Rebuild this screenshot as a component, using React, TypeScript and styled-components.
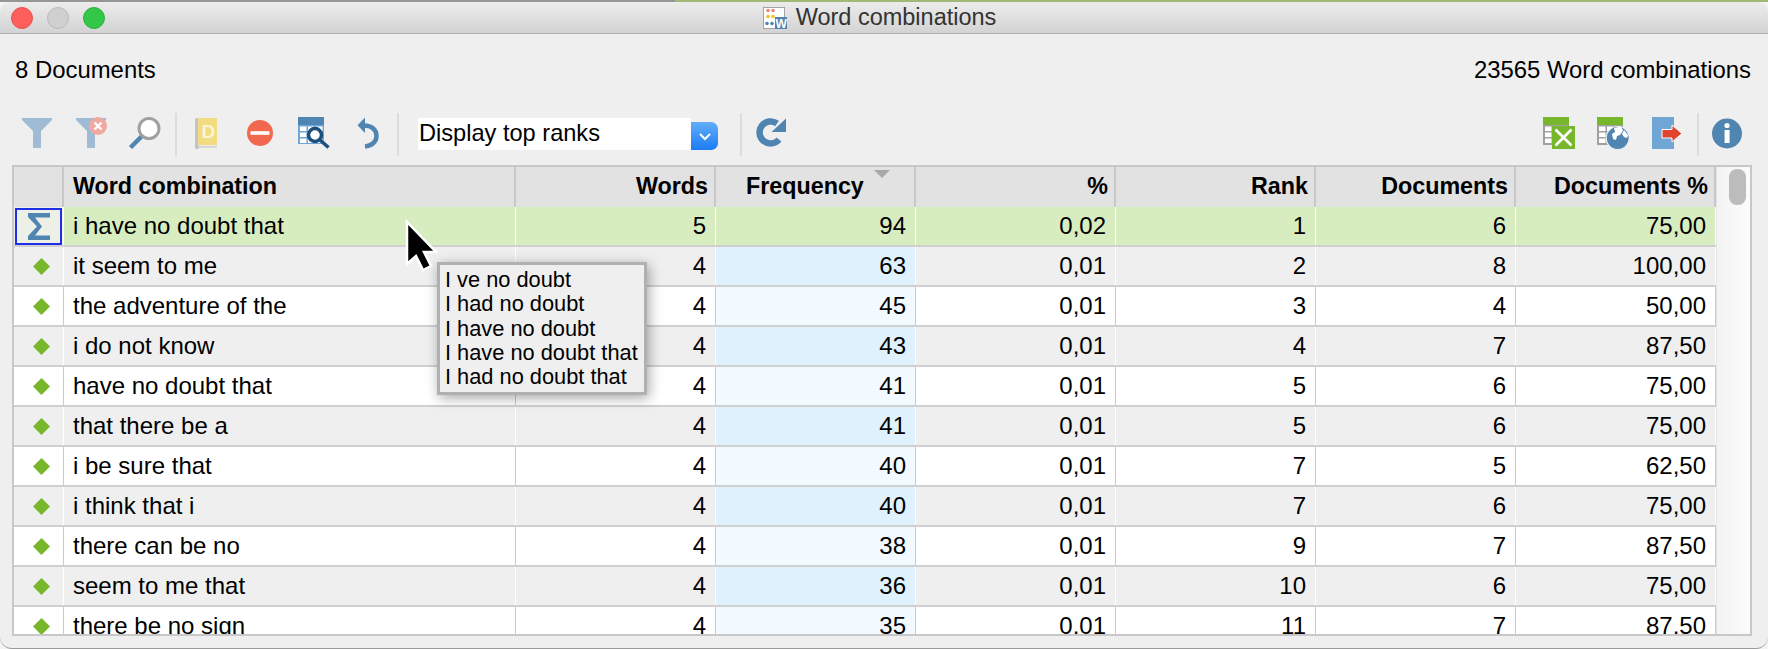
import styled, { createGlobalStyle } from "styled-components";

const GlobalStyle = createGlobalStyle`
  html, body { margin: 0; padding: 0; background: #f4f4f4; }
  body { font-family: "Liberation Sans", Arial, sans-serif; color: #000; }
`;

type Combination = {
  text: string;
  words: number;
  frequency: number;
  percent: string;
  rank: number;
  documents: number;
  documentsPercent: string;
};

const combinations: Combination[] = [
  { text: "i have no doubt that", words: 5, frequency: 94, percent: "0,02", rank: 1, documents: 6, documentsPercent: "75,00" },
  { text: "it seem to me", words: 4, frequency: 63, percent: "0,01", rank: 2, documents: 8, documentsPercent: "100,00" },
  { text: "the adventure of the", words: 4, frequency: 45, percent: "0,01", rank: 3, documents: 4, documentsPercent: "50,00" },
  { text: "i do not know", words: 4, frequency: 43, percent: "0,01", rank: 4, documents: 7, documentsPercent: "87,50" },
  { text: "have no doubt that", words: 4, frequency: 41, percent: "0,01", rank: 5, documents: 6, documentsPercent: "75,00" },
  { text: "that there be a", words: 4, frequency: 41, percent: "0,01", rank: 5, documents: 6, documentsPercent: "75,00" },
  { text: "i be sure that", words: 4, frequency: 40, percent: "0,01", rank: 7, documents: 5, documentsPercent: "62,50" },
  { text: "i think that i", words: 4, frequency: 40, percent: "0,01", rank: 7, documents: 6, documentsPercent: "75,00" },
  { text: "there can be no", words: 4, frequency: 38, percent: "0,01", rank: 9, documents: 7, documentsPercent: "87,50" },
  { text: "seem to me that", words: 4, frequency: 36, percent: "0,01", rank: 10, documents: 6, documentsPercent: "75,00" },
  { text: "there be no sign", words: 4, frequency: 35, percent: "0,01", rank: 11, documents: 7, documentsPercent: "87,50" },
];

const tooltipLines = ["I ve no doubt", "I had no doubt", "I have no doubt", "I have no doubt that", "I had no doubt that"];

const STEEL = "#5085b2";
const LIGHT_STEEL = "#6fa6d6";
const GREEN = "#78b62c";

const Page = styled.div`
  width: 1768px;
  height: 649px;
  overflow: hidden;
  position: relative;
`;

const TopStrip = styled.div`
  height: 2px;
  background: linear-gradient(to right, #969696 675px, #a3b878 675px);
`;

const Window = styled.div`
  height: 646px;
  background: #efefef;
  border-radius: 10px 10px 12px 12px;
  border-bottom: 1px solid #9a9a9a;
  overflow: hidden;
  display: flex;
  flex-direction: column;
`;

const TitleBar = styled.div`
  height: 31px;
  flex: none;
  display: grid;
  grid-template-columns: 1fr auto 1fr;
  align-items: center;
  background: linear-gradient(#ececec, #d3d3d3);
  border-bottom: 1px solid #b0b0b0;
  padding: 0 8px 0 11px;
`;

const Lights = styled.div`
  display: flex;
  gap: 14px;
`;

const Light = styled.span<{ $fill: string; $edge: string }>`
  width: 22px;
  height: 22px;
  border-radius: 50%;
  box-sizing: border-box;
  background: ${({ $fill }) => $fill};
  border: 1px solid ${({ $edge }) => $edge};
`;

const WindowTitle = styled.div`
  display: flex;
  align-items: center;
  gap: 9px;
  font-size: 23.5px;
  color: #333;
  margin-left: -12px;
`;

const InfoRow = styled.div`
  height: 78px;
  flex: none;
  display: flex;
  justify-content: space-between;
  align-items: center;
  padding: 0 17px 6px 15px;
  font-size: 23.9px;
  box-sizing: border-box;
`;

const Toolbar = styled.div`
  height: 44px;
  flex: none;
  display: flex;
  align-items: center;
  padding: 0 14px 0 10px;
`;

const ToolButton = styled.div`
  width: 54px;
  height: 40px;
  flex: none;
  display: flex;
  justify-content: center;
`;

const Divider = styled.div<{ $left?: number; $right?: number }>`
  width: 2px;
  height: 43px;
  flex: none;
  background: #dcdcdc;
  margin: 0 ${({ $right }) => $right ?? 3}px 0 ${({ $left }) => $left ?? 3}px;
`;

const Spacer = styled.div`
  flex: 1;
`;

const SelectBox = styled.div`
  display: flex;
  align-items: flex-end;
  margin-left: 16px;
  width: 300px;
  height: 32px;
  flex: none;
`;

const SelectLabel = styled.div`
  flex: 1;
  height: 32px;
  line-height: 31px;
  background: #fff;
  padding-left: 1px;
  font-size: 23.6px;
`;

const SelectArrow = styled.div`
  width: 27px;
  height: 28px;
  display: flex;
  align-items: center;
  justify-content: center;
  border-radius: 0 7px 7px 0;
  background: linear-gradient(#62adf8, #1b7cf4);
`;

const Table = styled.div`
  margin: 9px 16px 0 12px;
  height: 467px;
  flex: none;
  border: 2px solid #c8c8c8;
  display: flex;
  overflow: hidden;
  background: #fff;
`;

const Sheet = styled.div`
  width: 1702px;
  flex: none;
  overflow: hidden;
`;

const columns = "50px 452px repeat(6, 200px)";

const HeaderRow = styled.div`
  display: grid;
  grid-template-columns: ${columns};
  height: 40px;
  background: #e2e2e2;
`;

const HeaderCell = styled.div<{ $align?: string; $pad?: number }>`
  position: relative;
  display: flex;
  align-items: center;
  justify-content: ${({ $align }) => $align ?? "flex-end"};
  box-sizing: border-box;
  padding: 0 ${({ $pad }) => $pad ?? 6}px 2px 9px;
  border-right: 2px solid #c8c8c8;
  font-size: 23.3px;
  font-weight: 700;
`;

const FrequencyLabel = styled.span`
  margin-left: 21px;
`;

const SortMark = styled.span`
  position: absolute;
  right: 24px;
  top: 3px;
  width: 0;
  height: 0;
  border-left: 8px solid transparent;
  border-right: 8px solid transparent;
  border-top: 8px solid #a8a8a8;
`;

const RowWrap = styled.div<{ $bg: string }>`
  display: grid;
  grid-template-columns: ${columns};
  height: 40px;
  box-sizing: border-box;
  border-bottom: 2px solid #d0d0d0;
  background: ${({ $bg }) => $bg};
`;

const Cell = styled.div<{ $line: string; $bg?: string; $left?: boolean }>`
  display: flex;
  align-items: center;
  justify-content: ${({ $left }) => ($left ? "flex-start" : "flex-end")};
  box-sizing: border-box;
  padding: 0 9px 0 9px;
  border-right: 1px solid ${({ $line }) => $line};
  background: ${({ $bg }) => $bg ?? "transparent"};
  font-size: 24px;
  white-space: nowrap;
`;

const MarkerCell = styled.div<{ $line: string; $bg?: string; $shift: number }>`
  display: flex;
  align-items: center;
  justify-content: center;
  padding-left: ${({ $shift }) => $shift}px;
  border-right: 1px solid ${({ $line }) => $line};
  background: ${({ $bg }) => $bg ?? "transparent"};
`;

const TotalBox = styled.div`
  width: 47px;
  height: 37px;
  box-sizing: border-box;
  border: 2px solid #1f2fe6;
  background: #ecf0e6;
  display: flex;
  align-items: center;
  justify-content: center;
`;

const ScrollTrack = styled.div`
  flex: 1;
  background: linear-gradient(to right, #f3f3f3, #fbfbfb);
  border-left: 1px solid #e4e4e4;
  padding: 2px 4px 0 12px;
`;

const ScrollThumb = styled.div`
  height: 36px;
  border-radius: 8px;
  background: #bcbcbc;
`;

const Tooltip = styled.div`
  position: absolute;
  left: 437px;
  top: 262px;
  width: 210px;
  height: 133px;
  box-sizing: border-box;
  padding: 3px 5px;
  background: #efefef;
  border: 3px solid #b0b0b0;
  box-shadow: 2px 3px 12px rgba(0, 0, 0, 0.35);
  font-size: 21.8px;
  line-height: 24.3px;
  white-space: nowrap;
`;

const Pointer = styled.svg`
  position: absolute;
  left: 404px;
  top: 219px;
`;

const FunnelShape = () => <polygon points="5,4 35,4 35,6 24,17 24,34 16,34 16,17 5,6" fill="#9fbcd4" />;

const Icon = ({ children }: { children: React.ReactNode }) => (
  <svg width="40" height="40" viewBox="0 0 40 40">
    {children}
  </svg>
);

const TableCells = () => (
  <>
    {[0, 1, 2].map((r) =>
      [0, 1, 2].map((c) => <rect key={`${r}-${c}`} x={6 + c * 8} y={12.5 + r * 6} width="6.5" height="4.5" fill="#fff" />),
    )}
  </>
);

const FilterIcon = () => (
  <Icon>
    <FunnelShape />
  </Icon>
);

const ClearFilterIcon = () => (
  <Icon>
    <FunnelShape />
    <circle cx="27" cy="12" r="9" fill="#f0a9a0" />
    <path d="M23.5 8.5l7 7M30.5 8.5l-7 7" stroke="#fff" strokeWidth="2.4" />
  </Icon>
);

const SearchIcon = () => (
  <Icon>
    <path d="M5.5 33.5L17 22" stroke={STEEL} strokeWidth="4.5" />
    <circle cx="24" cy="14.5" r="10" fill="#fff" stroke="#a0a0a0" strokeWidth="3" />
  </Icon>
);

const BookIcon = () => (
  <Icon>
    <rect x="9" y="4" width="4" height="31" rx="1.5" fill="#c4c4c4" />
    <rect x="12" y="4" width="19" height="27" fill="#f2dc82" />
    <rect x="12" y="32" width="19" height="1.5" fill="#cfcfcf" />
    <text x="15.5" y="24" fontFamily="Liberation Sans, sans-serif" fontSize="19" fontWeight="700" fill="#fbf5d6">
      D
    </text>
  </Icon>
);

const RemoveIcon = () => (
  <Icon>
    <circle cx="20" cy="19" r="13" fill="#f1684f" />
    <rect x="10.5" y="17.2" width="19" height="3.6" fill="#fff" />
  </Icon>
);

const TableSearchIcon = () => (
  <Icon>
    <rect x="4" y="3" width="26" height="27" fill={LIGHT_STEEL} />
    <rect x="4" y="3" width="26" height="8" fill={STEEL} />
    <TableCells />
    <circle cx="21" cy="21" r="6.5" fill="#fff" stroke="#1d4f7d" strokeWidth="3.5" />
    <path d="M26 26l8.5 7.5" stroke="#1d4f7d" strokeWidth="3.5" />
  </Icon>
);

const UndoIcon = () => (
  <Icon>
    <polygon points="9.5,11.3 17,3.5 17,19" fill={STEEL} />
    <path d="M16 11.5C24 11.5 28.5 16 28.5 22C28.5 28 23.5 32 17 32.5" fill="none" stroke={STEEL} strokeWidth="4.5" />
  </Icon>
);

const ReloadIcon = () => (
  <Icon>
    <path d="M26 9.5A11 11 0 1 0 28 25.5" fill="none" stroke={STEEL} strokeWidth="6.5" />
    <polygon points="35,4.5 35,18 20.5,18" fill={STEEL} />
  </Icon>
);

const ExcelIcon = () => (
  <Icon>
    <rect x="4" y="3" width="26" height="28" fill="#a0a0a0" />
    <rect x="4" y="3" width="26" height="8" fill={GREEN} />
    <TableCells />
    <rect x="13" y="12" width="23" height="23" fill={GREEN} />
    <path d="M16.5 15.5l16 16M32.5 15.5l-16 16" stroke="#fff" strokeWidth="2.6" />
  </Icon>
);

const WebTableIcon = () => (
  <Icon>
    <rect x="4" y="3" width="26" height="28" fill="#a0a0a0" />
    <rect x="4" y="3" width="26" height="8" fill={GREEN} />
    <TableCells />
    <circle cx="24.7" cy="24" r="11.5" fill={STEEL} stroke="#eaf1f7" strokeWidth="1.2" />
    <path d="M21 14l7-1.5 2 4-3 4.5-3 1 -1 4-3-1-1-5 3-2z" fill="#fff" />
    <path d="M31 16l4 5-1 3-3-1-2-3z" fill="#fff" />
  </Icon>
);

const ExportIcon = () => (
  <Icon>
    <rect x="5" y="3" width="22" height="32" fill={LIGHT_STEEL} />
    <polygon points="15,15.5 25,15.5 25,11 35,19.5 25,28 25,24 15,24" fill="#e2452f" stroke="#fff" strokeWidth="1" />
  </Icon>
);

const InfoIcon = () => (
  <Icon>
    <circle cx="20" cy="19.5" r="15" fill={STEEL} />
    <circle cx="20" cy="11.5" r="2.6" fill="#fff" />
    <rect x="17.6" y="16" width="5" height="13" fill="#fff" />
  </Icon>
);

const DocIcon = () => (
  <svg width="24" height="22" viewBox="0 0 24 22">
    <rect x="0.5" y="0.5" width="21" height="21" fill="#fff" stroke="#a3a3a3" />
    <circle cx="5" cy="3.5" r="1.8" fill="#f0857a" />
    <circle cx="10" cy="3.5" r="1.8" fill="#f0857a" />
    <circle cx="5" cy="9.5" r="1.8" fill="#f2c521" />
    <circle cx="10" cy="9.5" r="1.8" fill="#f2c521" />
    <circle cx="4" cy="16.5" r="1.8" fill={STEEL} />
    <circle cx="9" cy="16.5" r="1.8" fill={STEEL} />
    <rect x="12" y="10" width="12" height="12" fill={STEEL} />
    <text x="12.6" y="20.5" fontFamily="Liberation Sans, sans-serif" fontSize="12" fontWeight="700" fill="#fff">
      W
    </text>
  </svg>
);

const Diamond = () => (
  <svg width="17" height="17" viewBox="0 0 16 16">
    <polygon points="8,0 16,8 8,16 0,8" fill={GREEN} />
  </svg>
);

const Sigma = () => (
  <svg width="22" height="27" viewBox="0 0 22 27">
    <polygon points="0,0 22,0 22,4.5 7,4.5 14,13.5 7,22.5 22,22.5 22,27 0,27 0,23 9,13.5 0,4" fill={STEEL} />
  </svg>
);

const App = () => {
  return (
    <Page>
      <GlobalStyle />
      <TopStrip />
      <Window>
        <TitleBar>
          <Lights>
            <Light $fill="#fc5f5c" $edge="#e4514e" />
            <Light $fill="#d0d0d0" $edge="#b9b9b9" />
            <Light $fill="#33c748" $edge="#2bb03e" />
          </Lights>
          <WindowTitle>
            <DocIcon />
            Word combinations
          </WindowTitle>
          <div />
        </TitleBar>

        <InfoRow>
          <span>8 Documents</span>
          <span>23565 Word combinations</span>
        </InfoRow>

        <Toolbar>
          <ToolButton><FilterIcon /></ToolButton>
          <ToolButton><ClearFilterIcon /></ToolButton>
          <ToolButton><SearchIcon /></ToolButton>
          <Divider $right={2} />
          <ToolButton><BookIcon /></ToolButton>
          <ToolButton><RemoveIcon /></ToolButton>
          <ToolButton><TableSearchIcon /></ToolButton>
          <ToolButton><UndoIcon /></ToolButton>
          <Divider $left={2} />
          <SelectBox>
            <SelectLabel>Display top ranks</SelectLabel>
            <SelectArrow>
              <svg width="14" height="9" viewBox="0 0 14 9">
                <path d="M2 2l5 5 5-5" fill="none" stroke="#fff" strokeWidth="2" />
              </svg>
            </SelectArrow>
          </SelectBox>
          <Divider $left={22} $right={2} />
          <ToolButton><ReloadIcon /></ToolButton>
          <Spacer />
          <ToolButton><ExcelIcon /></ToolButton>
          <ToolButton><WebTableIcon /></ToolButton>
          <ToolButton><ExportIcon /></ToolButton>
          <Divider $right={1} />
          <ToolButton><InfoIcon /></ToolButton>
        </Toolbar>

        <Table>
          <Sheet>
            <HeaderRow>
              <HeaderCell />
              <HeaderCell $align="flex-start">Word combination</HeaderCell>
              <HeaderCell>Words</HeaderCell>
              <HeaderCell $align="flex-start" $pad={0}>
                <FrequencyLabel>Frequency</FrequencyLabel>
                <SortMark />
              </HeaderCell>
              <HeaderCell>%</HeaderCell>
              <HeaderCell>Rank</HeaderCell>
              <HeaderCell>Documents</HeaderCell>
              <HeaderCell>Documents %</HeaderCell>
            </HeaderRow>

            {combinations.map((row, i) => {
              const first = i === 0;
              const shaded = i % 2 === 1;
              const bg = first ? "#d8edbf" : shaded ? "#efefef" : "#ffffff";
              const line = first || shaded ? "#ffffff" : "#cacaca";
              const frequencyBg = first ? undefined : shaded ? "#e0f1fe" : "#f2f9ff";
              return (
                <RowWrap key={row.text} $bg={bg}>
                  <MarkerCell $line={line} $bg={first ? "#efefef" : undefined} $shift={first ? 0 : 5}>
                    {first ? (
                      <TotalBox>
                        <Sigma />
                      </TotalBox>
                    ) : (
                      <Diamond />
                    )}
                  </MarkerCell>
                  <Cell $line={line} $left>{row.text}</Cell>
                  <Cell $line={line}>{row.words}</Cell>
                  <Cell $line={line} $bg={frequencyBg}>{row.frequency}</Cell>
                  <Cell $line={line}>{row.percent}</Cell>
                  <Cell $line={line}>{row.rank}</Cell>
                  <Cell $line={line}>{row.documents}</Cell>
                  <Cell $line={line}>{row.documentsPercent}</Cell>
                </RowWrap>
              );
            })}
          </Sheet>
          <ScrollTrack>
            <ScrollThumb />
          </ScrollTrack>
        </Table>
      </Window>

      <Tooltip>
        {tooltipLines.map((line) => (
          <div key={line}>{line}</div>
        ))}
      </Tooltip>

      <Pointer width="34" height="54" viewBox="-2 -2 34 54">
        <path d="M1 1L1 43L10 35L17 49L25 45L18 31L30 31Z" fill="#000" stroke="#fff" strokeWidth="2.5" />
      </Pointer>
    </Page>
  );
};

export default App;
